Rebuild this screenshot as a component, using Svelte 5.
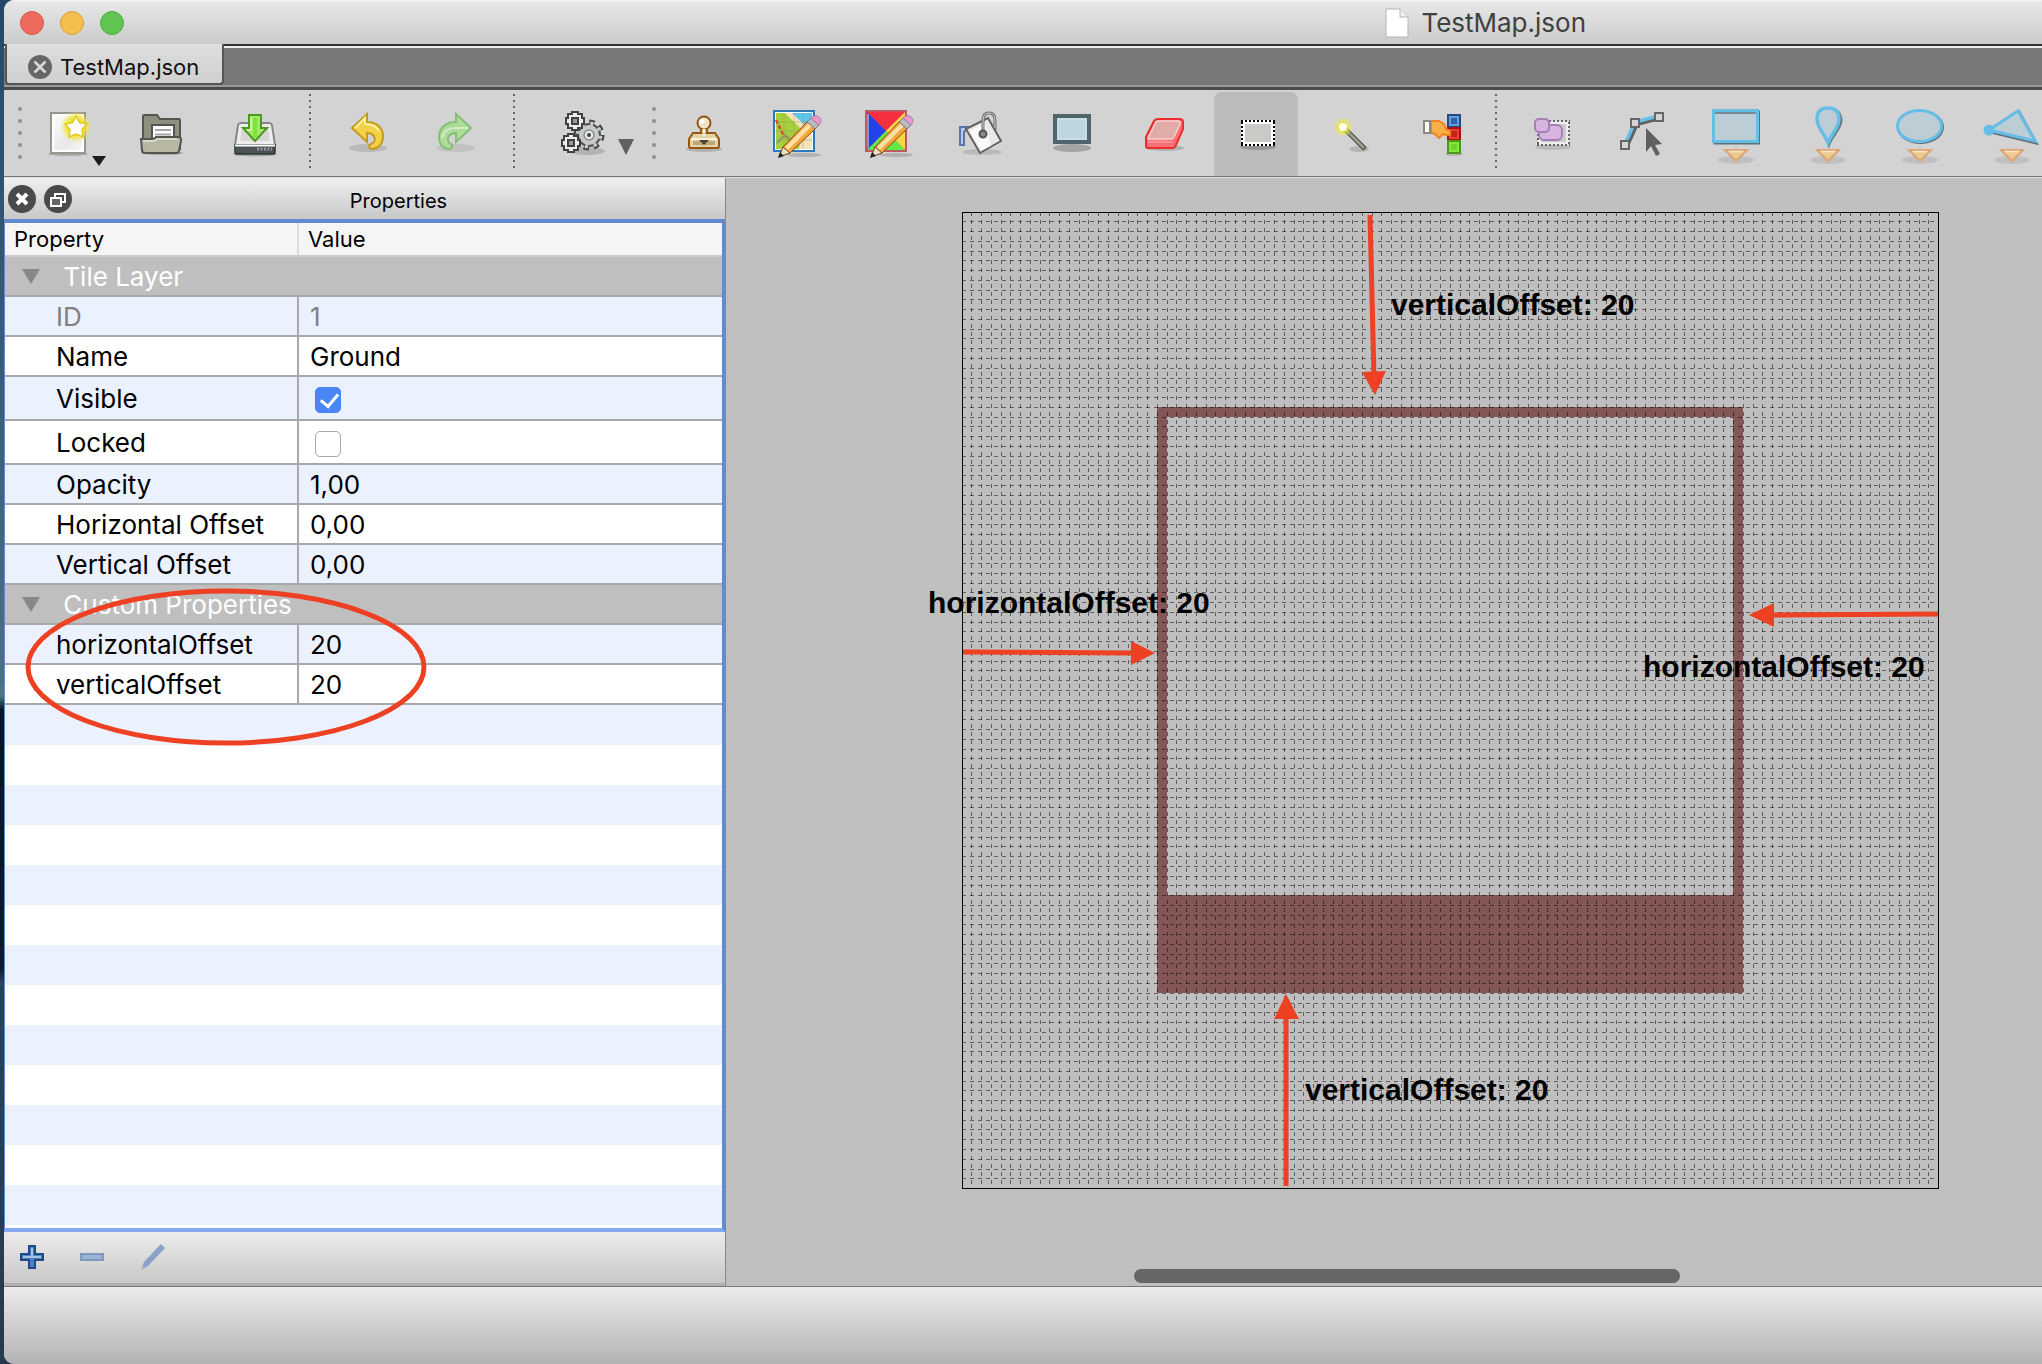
<script>
  const tiles = 100;
  const tile = 9.765625;
  const at = (n) => Math.floor(n * tile);
  const size = at(tiles);
  const grid = Array.from({ length: tiles - 1 }, (_, i) => at(i + 1) + 0.5);
  const gridPath = grid.map((p) => `M${p} 0V${size}M0 ${p}H${size}`).join('');

  const rows = [
    { group: 'Tile Layer' },
    { name: 'ID', value: '1', muted: true },
    { name: 'Name', value: 'Ground' },
    { name: 'Visible', check: true, on: true },
    { name: 'Locked', check: true, on: false },
    { name: 'Opacity', value: '1,00' },
    { name: 'Horizontal Offset', value: '0,00' },
    { name: 'Vertical Offset', value: '0,00' },
    { group: 'Custom Properties' },
    { name: 'horizontalOffset', value: '20' },
    { name: 'verticalOffset', value: '20' }
  ];
  // Stripes alternate through the whole list, restarting after each group row.
  const striped = [1, 3, 5, 7, 9];
</script>

{#snippet pencil()}
  <ellipse cx="32" cy="46" rx="17" ry="2" fill="#000" opacity=".16" />
  <path d="M8 47l3-9L36 12l8 7-26 25z" fill="#f6a43c" stroke="#8a4a12" stroke-width="1" />
  <path d="M13 38l24-24 3 3-24 24z" fill="#ffe0a8" />
  <path d="M7 48l4-10 7 6z" fill="#f3dcc0" stroke="#6b4a2a" stroke-width="1" />
  <path d="M6 49l2-6 4 4z" fill="#222" />
  <path d="M35 13l4-4 8 7-4 4z" fill="#b9b9c0" stroke="#777" stroke-width="1" />
  <path d="M39 9q4-4 8-1t0 8z" fill="#e79ad0" stroke="#b878a8" stroke-width="1" />
{/snippet}

{#snippet marker()}
  <ellipse cx="24" cy="51" rx="18" ry="4" fill="#000" opacity=".09" />
  <path d="M13 41h22L24 52z" fill="#eccb92" stroke="#e0a574" stroke-width="2" />
  <path d="M17 42.500h14" stroke="#f5e6c8" stroke-width="1.500" />
{/snippet}

<div class="desktop">
  <div class="window">
    <header class="titlebar">
      <div class="lights">
        <button class="light close" aria-label="Close window"></button>
        <button class="light mini" aria-label="Minimize window"></button>
        <button class="light full" aria-label="Zoom window"></button>
      </div>
      <h1>
        <svg width="24" height="30" viewBox="0 0 24 30"><path d="M1 1h14l8 8v20H1z" fill="#fff" stroke="#b4b4b4" /><path d="M15 1v8h8" fill="#eee" stroke="#b4b4b4" /></svg>
        TestMap.json
      </h1>
    </header>

    <nav class="tabs">
      <div class="tab">
        <button class="plain" aria-label="Close tab">
          <svg width="24" height="24" viewBox="0 0 24 24"><circle cx="12" cy="12" r="12" fill="#666" /><path d="M6.500 6.500l11 11M17.500 6.500l-11 11" stroke="#d8d8d8" stroke-width="2.500" /></svg>
        </button>
        <a href="#map">TestMap.json</a>
      </div>
    </nav>

    <div class="toolbar" role="toolbar" aria-label="Tools">
      <span class="handle"><i></i><i></i><i></i><i></i><i></i></span>
      <button class="tool" aria-label="New">
        <svg viewBox="0 0 48 48">
          <defs>
            <radialGradient id="glow"><stop offset=".5" stop-color="#f0e42a" /><stop offset="1" stop-color="#f4ec50" stop-opacity="0" /></radialGradient>
            <linearGradient id="paper" x2="1" y2="1"><stop offset="0" stop-color="#fff" /><stop offset=".6" stop-color="#e8e8e8" /><stop offset="1" stop-color="#fafafa" /></linearGradient>
          </defs>
          <ellipse cx="22" cy="45" rx="20" ry="2" fill="#000" opacity=".18" />
          <path d="M5 4h34v40H5z" fill="url(#paper)" stroke="#96968f" stroke-width="2" />
          <path d="M7 6h30v36H7z" fill="none" stroke="#fff" stroke-width="2" />
          <circle cx="30" cy="18" r="16" fill="url(#glow)" />
          <path d="M30 7l3.500 6.500 7.500 1.500-5 5.500 1 7.500-7-3-7 3 1-7.500-5-5.500 7.500-1.500z" fill="#fff" stroke="#e8c71c" stroke-width="1.500" />
          <path d="M46 47h14l-7 10z" fill="#1c1c1c" />
        </svg>
      </button>
      <button class="tool" aria-label="Open">
        <svg viewBox="0 0 48 48">
          <ellipse cx="24" cy="44" rx="21" ry="2" fill="#000" opacity=".2" />
          <path d="M5 40V7q0-1 1-1h13l3 4h19q1 0 1 1v29z" fill="#8f8f80" stroke="#555550" stroke-width="2" />
          <path d="M14 34V16h22v18z" fill="#fff" stroke="#555550" stroke-width="2" />
          <path d="M17 21h16M17 25.500h16" stroke="#a8a8a8" stroke-width="2" />
          <path d="M3 30h11q3 0 4-2h22q4 0 3 4l-2 10q0 2-3 2H7q-3 0-3-3z" fill="#b7b7a4" stroke="#555550" stroke-width="2" />
          <path d="M5 32h10q3 0 4-2h20" fill="none" stroke="#d8d8ca" stroke-width="2" />
        </svg>
      </button>
      <button class="tool" aria-label="Save">
        <svg viewBox="0 0 48 48">
          <ellipse cx="25" cy="45" rx="22" ry="2.500" fill="#000" opacity=".2" />
          <path d="M5 36l3-20q1-2 3-2h28q2 0 3 2l3 20z" fill="#eeeeec" stroke="#85878a" stroke-width="2" />
          <path d="M10 32l2-14h26l2 14z" fill="#d6d6d4" />
          <path d="M5 36h40v7q0 2-2 2H7q-2 0-2-2z" fill="#4b5356" stroke="#2e3436" stroke-width="1.500" />
          <path d="M5 36.500h40" stroke="#fff" stroke-width="2" />
          <path d="M27 40h15" stroke="#92999a" stroke-width="3" stroke-dasharray="2 1.500" />
          <path d="M19 6h12v13h6L25 32 13 19h6z" fill="#a4e56d" stroke="#4b9a1e" stroke-width="2" />
          <path d="M25 9v19" stroke="#7be53a" stroke-width="4" />
          <path d="M21 8v13h-4" fill="none" stroke="#d4f7b6" stroke-width="1.500" />
        </svg>
      </button>
      <span class="sep"></span>
      <button class="tool" aria-label="Undo">
        <svg viewBox="0 0 48 48">
          <ellipse cx="26" cy="39" rx="19" ry="4" fill="#000" opacity=".12" />
          <path d="M10 19L25 5v8c10 0 16 6 16 14 0 9-6 13-11 13-3 0-4-4-1-5 6-2 5-11-4-11v9z" fill="#f3d24a" stroke="#c69b1b" stroke-width="2" />
          <path d="M13 19L23 9v6c6 0 11 2 14 7" fill="none" stroke="#fdf0a4" stroke-width="2" />
        </svg>
      </button>
      <button class="tool" aria-label="Redo">
        <svg viewBox="0 0 48 48">
          <ellipse cx="22" cy="39" rx="19" ry="4" fill="#000" opacity=".08" />
          <path d="M37 19L22 5v8C12 13 5 19 5 28c0 8 5 12 10 12 3 0 4-4 2-5-5-2-4-11 5-11v9z" fill="#aedb99" stroke="#85c076" stroke-width="2" />
          <path d="M34 19H22c-8 0-13 4-14 10" fill="none" stroke="#d3edc4" stroke-width="2" />
        </svg>
      </button>
      <span class="sep"></span>
      <button class="tool wide" aria-label="Commands">
        <svg viewBox="0 0 48 48">
          <ellipse cx="28" cy="42" rx="18" ry="4" fill="#000" opacity=".15" />
          <circle cx="30" cy="26" r="12.500" fill="none" stroke="#3e4244" stroke-width="6" stroke-dasharray="5 4.800" />
          <circle cx="30" cy="26" r="11" fill="#c9cbc8" stroke="#4e5254" stroke-width="2" />
          <circle cx="30" cy="26" r="11.500" fill="none" stroke="#c9cbc8" stroke-width="4" stroke-dasharray="3 6.030" stroke-dashoffset="-1" />
          <circle cx="30" cy="26" r="5" fill="#e8e8e6" stroke="#8b8e8c" stroke-width="1.500" />
          <circle cx="30" cy="26" r="2" fill="#3e4244" />
          <g fill="#ececea" stroke="#3e4244" stroke-width="2">
            <path d="M9 5h4V3h6v2h4v4h2v6h-2v4h-4v2h-6v-2H9v-4H7V9h2z" />
            <path d="M5 27h4v-2h6v2h4v4h2v6h-2v4h-4v2H9v-2H5v-4H3v-6h2z" />
            <path d="M13 9h6v6h-6zM9 31h6v6H9z" fill="#999" />
          </g>
        </svg>
        <svg class="drop" viewBox="0 0 16 16"><path d="M0 0h16L8 16z" fill="#606060" /></svg>
      </button>
      <span class="handle narrow"><i></i><i></i><i></i><i></i><i></i></span>
      <button class="tool" aria-label="Stamp Brush">
        <svg viewBox="0 0 48 48">
          <ellipse cx="24" cy="40" rx="18" ry="3" fill="#000" opacity=".16" />
          <path d="M21 19h6v8h-6z" fill="#f6ecd2" stroke="#96560f" stroke-width="2" />
          <circle cx="24" cy="14" r="6.500" fill="#efe2c8" stroke="#96560f" stroke-width="2" />
          <circle cx="22" cy="12" r="2.500" fill="#fff" />
          <path d="M13 24h22l4 6v7q0 2-2 2H11q-2 0-2-2v-7z" fill="#e4d3a5" stroke="#96560f" stroke-width="2" />
          <path d="M11 30h26" stroke="#fbf3dc" stroke-width="2" />
          <path d="M13 34h22" stroke="#b9a878" stroke-width="4" />
          <path d="M19 31h10l-5 5z" fill="#4d4430" />
          <path d="M22.500 20h3v7h-3z" fill="#f6ecd2" />
        </svg>
      </button>
      <button class="tool" aria-label="Terrain Brush">
        <svg viewBox="0 0 48 48">
          <path d="M2 2h40v40H2z" fill="#fff" stroke="#2c78b8" stroke-width="2" />
          <path d="M4 4h36v36H4z" fill="#f5e4bd" />
          <path d="M4 4h9l17 17-3 19H4z" fill="#a5d03c" />
          <path d="M20 4h20v19z" fill="#5cc4f2" />
          <path d="M4 11l7 14 8 6" stroke="#d8452c" stroke-width="2.500" stroke-dasharray="4 2" fill="none" />
          <path d="M5 34l8-8 8 8" fill="none" stroke="#8a9a70" stroke-width="2" />
          <path d="M12 4v36M22 4v36M31 4v36M4 13h36M4 22h36M4 31h36" stroke="#9a9d60" stroke-width="1" opacity=".5" />
          {@render pencil()}
        </svg>
      </button>
      <button class="tool" aria-label="Wang Brush">
        <svg viewBox="0 0 48 48">
          <path d="M2 2h40v40H2z" fill="#ef5060" />
          <path d="M3 3l19 19L41 3z" fill="#f73040" />
          <path d="M3 3v38l19-19z" fill="#2442ea" />
          <path d="M41 3v38L22 22z" fill="#f8d648" />
          <path d="M3 41h38L22 22z" fill="#5dec45" />
          <path d="M2 2h40v40H2z" fill="none" stroke="#bb5965" stroke-width="2" />
          <path d="M4 5v34" stroke="#8094ee" stroke-width="2" />
          {@render pencil()}
        </svg>
      </button>
      <button class="tool" aria-label="Bucket Fill">
        <svg viewBox="0 0 48 48">
          <ellipse cx="26" cy="43" rx="20" ry="3" fill="#000" opacity=".12" />
          <path d="M4 36V18h9l-5 5v13z" fill="#b9c7e6" stroke="#5b74aa" stroke-width="2" />
          <path d="M10 20L32 9l13 23-21 12z" fill="#e9e9e9" stroke="#626262" stroke-width="2" />
          <path d="M14 22l15-8 6 23-10 4z" fill="#fff" opacity=".8" />
          <path d="M27 24V11q0-7 6-7t6 7v10" fill="none" stroke="#6a6a6a" stroke-width="3" />
          <path d="M27 22V11q0-7 6-7t6 7v8" fill="none" stroke="#d5d5d5" stroke-width="1" />
          <circle cx="27" cy="25" r="3.500" fill="#888" stroke="#555" stroke-width="2" />
        </svg>
      </button>
      <button class="tool" aria-label="Shape Fill">
        <svg viewBox="0 0 48 48">
          <ellipse cx="24" cy="39" rx="19" ry="4" fill="#000" opacity=".22" />
          <path d="M7 7h34v26H7z" fill="#bcd5de" stroke="#51646c" stroke-width="4" />
          <path d="M10 10h28v20H10z" fill="none" stroke="#cbe0e7" stroke-width="1.500" />
        </svg>
      </button>
      <button class="tool" aria-label="Eraser">
        <svg viewBox="0 0 48 48">
          <ellipse cx="25" cy="39" rx="19" ry="3" fill="#000" opacity=".16" />
          <path d="M6 28L14 12q1-2 4-2h21q4 0 4 3v7l-7 16q-1 3-4 3H8q-2 0-2-2z" fill="#fb7176" stroke="#ee2c2c" stroke-width="2" />
          <path d="M8 29L16 13q1-1 3-1h19q3 0 2 3l-6 13q-1 2-3 2H8z" fill="#e1aba8" stroke="#f5d0ce" stroke-width="1.500" />
          <path d="M8 33h24" stroke="#ff9aa0" stroke-width="1.500" />
        </svg>
      </button>
      <button class="tool active" aria-label="Rectangular Select" aria-pressed="true">
        <svg viewBox="0 0 48 48">
          <ellipse cx="26" cy="38" rx="18" ry="3" fill="#000" opacity=".2" />
          <path d="M10 12h32v24H10z" fill="#fff" />
          <path d="M13 15h26v18H13z" fill="#c9cbc6" />
          <path d="M10 12h32v24H10z" fill="none" stroke="#fff" stroke-width="2" />
          <path d="M9 12h34M9 36h34M10 13v24M42 13v24" stroke="#000" stroke-width="2" stroke-dasharray="2 2" />
        </svg>
      </button>
      <button class="tool" aria-label="Magic Wand">
        <svg viewBox="0 0 48 48">
          <ellipse cx="35" cy="40" rx="10" ry="3" fill="#000" opacity=".14" />
          <path d="M20 19l21 21" stroke="#4d5148" stroke-width="5" />
          <path d="M20 19l20 20" stroke="#9aa58e" stroke-width="2.500" />
          <circle cx="19" cy="18" r="10" fill="url(#glow)" opacity=".75" />
          <circle cx="19" cy="18" r="4" fill="#fffef0" />
        </svg>
      </button>
      <button class="tool" aria-label="Select Same Tile">
        <svg viewBox="0 0 48 48">
          <ellipse cx="38" cy="45" rx="9" ry="2" fill="#000" opacity=".14" />
          <path d="M32 6h12v12H32z" fill="#6b9bd2" stroke="#1e4c8c" stroke-width="2" /><path d="M35 9h6v6h-6z" fill="#2f64ad" />
          <path d="M32 19h12v12H32z" fill="#ea3c38" stroke="#a81410" stroke-width="2" /><path d="M35 22h6v6h-6z" fill="#c8241e" />
          <path d="M32 32h12v12H32z" fill="#8ae540" stroke="#4c9a1c" stroke-width="2" /><path d="M35 35h6v6h-6z" fill="#6ed32c" />
          <path d="M15 12h8l5 3 2 5 4 2v4h-4l-3-1-4 4-4-4-4-1z" fill="#fbb048" stroke="#f28420" stroke-width="2" />
          <path d="M8 12h6v12H8z" fill="#fff" stroke="#868a84" stroke-width="2" />
        </svg>
      </button>
      <span class="sep"></span>
      <button class="tool" aria-label="Select Objects">
        <svg viewBox="0 0 48 48">
          <ellipse cx="25" cy="38" rx="18" ry="3" fill="#000" opacity=".12" />
          <path d="M10 12h31v24H10z" fill="#eee" />
          <path d="M13 15h25v18H13z" fill="#cacaca" />
          <path d="M9 12h33M9 36h33M10 13v24M41 13v24" stroke="#666" stroke-width="2" stroke-dasharray="2 2" />
          <rect x="11" y="16" width="23" height="15" rx="5" fill="#d8b4e0" stroke="#a57fb4" stroke-width="2" />
          <rect x="7" y="10" width="14" height="13" rx="4" fill="#d8b4e0" stroke="#a57fb4" stroke-width="2" />
        </svg>
      </button>
      <button class="tool" aria-label="Edit Polygons">
        <svg viewBox="0 0 48 48">
          <path d="M7 37l10-22 23-6" fill="none" stroke="#606060" stroke-width="4" />
          <path d="M5 35l10-22 23-6" fill="none" stroke="#67bfe8" stroke-width="3.500" />
          <g fill="#d4d4d4" stroke="#666" stroke-width="2"><path d="M1 32h8v8H1zM11 10h8v8h-8zM35 4h8v8h-8z" /></g>
          <path d="M26 19l16 16-7 1 5 9-4 2-5-10-5 6z" fill="#606060" />
        </svg>
      </button>
      <button class="tool" aria-label="Insert Rectangle">
        <svg viewBox="0 0 48 48">
          <path d="M3 3h43.500v31H3z" fill="none" stroke="#60717a" stroke-width="3" />
          <path d="M1.500 1.500h44v31h-44z" fill="#bccdd6" stroke="#66bde8" stroke-width="3" />
          <path d="M3 4h41" stroke="#5d7480" stroke-width="1.500" />
          {@render marker()}
        </svg>
      </button>
      <button class="tool" aria-label="Insert Point">
        <svg viewBox="0 0 48 48">
          <path d="M25 35C22 26 14 20 14 11q0-11 11-11t12 11c0 9-9 15-12 24z" fill="none" stroke="#667780" stroke-width="3" />
          <path d="M24 34C21 25 13 19 13 10q0-11 11-11t11 11c0 9-8 15-11 24z" fill="#bccdd6" stroke="#66bde8" stroke-width="3.500" />
          {@render marker()}
        </svg>
      </button>
      <button class="tool" aria-label="Insert Ellipse">
        <svg viewBox="0 0 48 48">
          <ellipse cx="24.500" cy="18" rx="22" ry="15.500" fill="none" stroke="#60717a" stroke-width="3" />
          <ellipse cx="23.500" cy="17" rx="22" ry="15.500" fill="#bccdd6" stroke="#66bde8" stroke-width="3" />
          {@render marker()}
        </svg>
      </button>
      <button class="tool" aria-label="Insert Polygon">
        <svg viewBox="0 0 48 48">
          <path d="M3 23L31 3l17 31z" fill="none" stroke="#60717a" stroke-width="3" />
          <path d="M1 21L30 2l17 30z" fill="#bccdd6" stroke="#66bde8" stroke-width="3" />
          <circle cx="1" cy="21" r="5.500" fill="#66bde8" />
          {@render marker()}
        </svg>
      </button>
    </div>

    <div class="workspace">
      <aside class="panel">
        <div class="panel-head">
          <button class="plain" aria-label="Close panel">
            <svg width="28" height="28" viewBox="0 0 28 28"><circle cx="14" cy="14" r="14" fill="#4a4a4a" /><path d="M9 9l10 10M19 9L9 19" stroke="#fff" stroke-width="4" /></svg>
          </button>
          <button class="plain" aria-label="Float panel">
            <svg width="28" height="28" viewBox="0 0 28 28"><circle cx="14" cy="14" r="14" fill="#4a4a4a" /><path d="M11 12V9h10v8h-3" fill="none" stroke="#fff" stroke-width="2" /><path d="M7 13h10v8H7z" fill="#666" stroke="#fff" stroke-width="2" /></svg>
          </button>
          <h2>Properties</h2>
        </div>
        <div class="list">
          <table>
            <thead>
              <tr><th class="key"><span>Property</span></th><th><span>Value</span></th></tr>
            </thead>
            <tbody>
              {#each rows as row, i}
                {#if row.group}
                  <tr class="group">
                    <th colspan="2">
                      <svg width="18" height="15" viewBox="0 0 18 15"><path d="M0 0h18L9 15z" fill="#888" /></svg>
                      {row.group}
                    </th>
                  </tr>
                {:else}
                  <tr class:striped={striped.includes(i)} class:muted={row.muted} class:tall={row.check}>
                    <td class="key">
                      {#if row.check}<label for={row.name}>{row.name}</label>{:else}{row.name}{/if}
                    </td>
                    <td class="value">
                      {#if row.check}<input id={row.name} type="checkbox" checked={row.on} />{:else}{row.value}{/if}
                    </td>
                  </tr>
                {/if}
              {/each}
            </tbody>
          </table>
          <div class="filler"></div>
        </div>
        <div class="actions">
          <button class="plain" aria-label="Add property">
            <svg width="24" height="24" viewBox="0 0 24 24"><path d="M9 1h6v8h8v6h-8v8H9v-8H1V9h8z" fill="#4c80be" stroke="#204a87" stroke-width="2" /><path d="M12 3v9H3M13 12h8" fill="none" stroke="#a4c2e4" stroke-width="2" /></svg>
          </button>
          <button class="plain" aria-label="Remove property">
            <svg width="24" height="24" viewBox="0 0 24 24"><path d="M1 9h22v6H1z" fill="#9bb4d4" stroke="#7f98bb" stroke-width="2" /></svg>
          </button>
          <button class="plain" aria-label="Rename property">
            <svg width="26" height="28" viewBox="0 0 26 28"><path d="M1 27l3-8L21 1l4 4L8 23z" fill="#8ba3c9" /><path d="M1 27l1.500-4 2.500 2.500z" fill="#b8b8b8" /></svg>
          </button>
        </div>
        <svg class="ring" viewBox="0 0 404 160"><ellipse cx="202" cy="80" rx="198" ry="76" fill="none" stroke="#ee4023" stroke-width="5" /></svg>
      </aside>

      <main class="canvas" id="map">
        <svg class="map" width={size + 1} height={size + 1} viewBox="0 0 {size + 1} {size + 1}">
          <path
            class="wall"
            d="M{at(20)} {at(20)}H{at(80)}V{at(80)}H{at(20)}zM{at(21)} {at(21)}V{at(70)}H{at(79)}V{at(21)}z"
          />
          <path class="grid" d={gridPath} />
          <rect class="edge" x=".5" y=".5" width={size} height={size} />
          <g class="arrows">
            <path d="M408 3l4 162M1 440l173 1M976 402l-170 1M324 974V803" />
            <path class="heads" d="M400 160l24-1-11 24zM169 429v24l24-12zM812 391v24l-25-12zM312 807h25l-13-25z" />
          </g>
          <text x="429" y="103">verticalOffset: 20</text>
          <text x="-34" y="401">horizontalOffset: 20</text>
          <text x="681" y="465">horizontalOffset: 20</text>
          <text x="343" y="888">verticalOffset: 20</text>
        </svg>
        <div class="scroll"></div>
      </main>
    </div>
    <footer></footer>
  </div>
</div>

<style>
  :global(body) { margin: 0; }
  * { box-sizing: border-box; }
  .desktop {
    min-height: 100vh;
    display: flex;
    padding-left: 4px;
    overflow: hidden;
    background: linear-gradient(#24486a, #4a6f86 50%, #56787f 51%, #0b1422 52%, #101a2c 71%, #2c4058 72%, #26394f);
    font-family: Inter, "Liberation Sans", sans-serif;
    color: #000;
  }
  .window {
    flex: 1;
    min-width: 0;
    display: flex;
    flex-direction: column;
    border-radius: 10px 0 0 10px;
    overflow: hidden;
    background: #bfbfbf;
  }
  button { border: 0; padding: 0; background: none; font: inherit; color: inherit; }
  h1, h2 { margin: 0; font-weight: 400; }
  svg { display: block; overflow: visible; flex: none; }
  .plain { display: block; }

  .titlebar {
    height: 44px;
    flex: none;
    display: flex;
    align-items: center;
    background: linear-gradient(#e8e8e8, #cbcbcb);
    border-top: 1px solid #f4f4f4;
  }
  .lights { display: flex; gap: 16px; padding-left: 16px; }
  .light { width: 24px; height: 24px; border-radius: 50%; border: 1px solid; }
  .close { background: #ee6a5e; border-color: #d65549; }
  .mini { background: #f5bf4f; border-color: #d9a03c; }
  .full { background: #61c554; border-color: #4dab3f; }
  h1 {
    margin-left: auto;
    margin-right: 456px;
    display: flex;
    align-items: center;
    gap: 12px;
    font-size: 26px;
    line-height: 32px;
    color: #404040;
  }

  .tabs {
    height: 46px;
    flex: none;
    display: flex;
    align-items: flex-start;
    background: #787878;
    border-bottom: 3px solid #4a4a4a;
    box-shadow: inset 0 2px #333, inset 0 4px #ececec, inset 0 -2px #999;
  }
  .tab {
    display: flex;
    align-items: center;
    gap: 8px;
    height: 41px;
    margin-left: 1px;
    padding: 6px 23px 0 21px;
    background: linear-gradient(#dedede, #d0d0d0);
    border: 2px solid #555;
    border-top: 0;
    border-radius: 0 0 4px 4px;
    font-size: 22px;
  }
  .tab a { color: #111; text-decoration: none; }

  .toolbar {
    height: 87px;
    flex: none;
    display: flex;
    overflow: hidden;
    background: #d3d3d3;
    border-bottom: 1px solid #777;
  }
  .toolbar > * { flex: none; }
  .handle {
    width: 20px;
    display: flex;
    flex-direction: column;
    justify-content: center;
    align-items: flex-end;
    gap: 8px;
    padding-right: 2px;
  }
  .narrow { width: 16px; }
  .handle i { width: 4px; height: 4px; border-radius: 50%; background: #8e8e8e; }
  .sep {
    width: 20px;
    display: flex;
    justify-content: center;
    padding: 4px 0;
  }
  .sep::before {
    content: '';
    width: 2px;
    background: repeating-linear-gradient(#666 0 2px, transparent 2px 6px);
  }
  .tool {
    width: 92px;
    display: flex;
    align-items: center;
    justify-content: center;
  }
  .tool svg { width: 48px; height: 48px; }
  .tool.wide { width: 118px; justify-content: flex-start; padding-left: 35px; gap: 11px; }
  .tool .drop { width: 16px; height: 16px; margin-top: 28px; }
  .active { width: 84px; margin: 2px 4px 0; padding-bottom: 2px; background: #bbb; border-radius: 8px 8px 0 0; }
  .tool.active { width: 84px; }

  .workspace { flex: 1; min-height: 0; display: flex; border-top: 1px solid #ddd; }
  .panel {
    position: relative;
    width: 722px;
    flex: none;
    display: flex;
    flex-direction: column;
    border-right: 1px solid #888;
  }
  .panel-head {
    height: 41px;
    display: flex;
    align-items: center;
    gap: 8px;
    padding-left: 4px;
    background: linear-gradient(#efefef, #c8c8c8);
  }
  .panel-head h2 { flex: 1; padding: 4px 8px 0 0; text-align: center; font-size: 20px; }
  .list {
    flex: 1;
    display: flex;
    flex-direction: column;
    background: #fff;
    border: solid #6489d0;
    border-width: 4px 3px 4px 1px;
    border-bottom-color: #86aaf0;
  }
  table { width: 100%; border-collapse: separate; border-spacing: 0; table-layout: fixed; }
  th, td { padding: 0; text-align: left; font-weight: 400; }
  thead th { height: 34px; background: #f5f5f5; border-bottom: 2px solid #ccc; font-size: 22px; padding: 0 0 0 9px; }
  thead th.key { box-shadow: inset -2px 0 #ddd; }
  .key { width: 294px; }
  tbody td { height: 40px; border-bottom: 2px solid #a8a8a8; font-size: 26px; line-height: 32px; padding: 2px 0 0 11px; }
  tbody td.key { border-right: 2px solid #a8a8a8; padding-left: 51px; }
  .tall td { height: 44px; }
  .striped td { background: #ebf1fe; }
  .muted td { color: #808080; }
  .group th { height: 40px; background: #bfbfbf; border-bottom: 2px solid #a8a8a8; color: #fff; font-size: 26px; line-height: 32px; padding: 2px 0 0 17px; }
  .group svg { display: inline-block; margin-right: 16px; vertical-align: 2px; }
  input {
    appearance: none;
    display: block;
    width: 26px;
    height: 26px;
    margin: 2px 0 0 5px;
    background: #fff;
    border: 1px solid #aaa;
    border-radius: 5px;
  }
  input:checked { background: #4a86f5; border-color: #4a86f5; }
  input:checked::before {
    content: '';
    display: block;
    width: 8px;
    height: 14px;
    margin: 2px 0 0 8px;
    border: solid #fff;
    border-width: 0 3px 3px 0;
    transform: rotate(40deg);
  }
  .filler { flex: 1; background: repeating-linear-gradient(#ebf1fe 0 40px, #fff 40px 80px); }
  .actions {
    height: 54px;
    display: flex;
    align-items: center;
    gap: 36px;
    padding: 0 0 2px 16px;
    background: linear-gradient(#ececec, #c8c8c8);
    border-bottom: 3px solid #b0b0b0;
  }
  .ring { position: absolute; left: 20px; top: 409px; width: 404px; height: 160px; }

  .canvas { position: relative; flex: 1; min-width: 0; overflow: hidden; padding: 34px 0 0 236px; }
  .wall { fill: #845656; fill-rule: evenodd; }
  .grid { fill: none; stroke: #000; stroke-opacity: .5; stroke-dasharray: 4 4; }
  .edge { fill: none; stroke: #000; }
  .arrows { stroke: #ee4023; stroke-width: 5; fill: none; }
  .heads { stroke: none; fill: #ee4023; }
  text { font: 700 30px "Liberation Sans", sans-serif; }
  .scroll {
    position: absolute;
    left: 31%;
    bottom: 3px;
    width: 546px;
    height: 14px;
    border-radius: 7px;
    background: #666;
  }
  footer { height: 78px; flex: none; background: linear-gradient(#ebebeb, #b3b3b3); border-top: 1px solid #777; }
</style>
